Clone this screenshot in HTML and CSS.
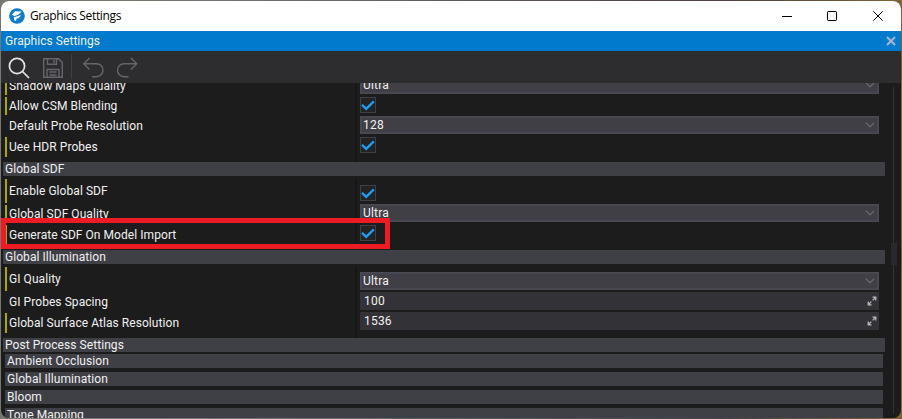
FILE: index.html
```html
<!DOCTYPE html>
<html lang="en">
<head>
<meta charset="utf-8">
<title>Graphics Settings</title>
<link rel="stylesheet" href="styles.css">
</head>
<body>
<svg width="0" height="0" class="defs">
  <symbol id="check" viewBox="0 0 16 16"><path d="M2 7.8 6.2 11.8 13.8 4.4" fill="none" stroke="#1ba1f2" stroke-width="2.3"/></symbol>
  <symbol id="chevron" viewBox="0 0 10 6"><path d="M.8.8 5 4.8 9.2.8" fill="none" stroke="#66666c" stroke-width="1.2"/></symbol>
  <symbol id="drag" viewBox="0 0 10 10"><path d="M2 8 4.3 5.7M5.7 4.3 8 2M5.5 1.2H8.8V4.5M4.5 8.8H1.2V5.5" fill="none" stroke="#bcbcbe" stroke-width="1.2"/></symbol>
</svg>
<div class="window">
  <header class="titlebar">
    <svg class="logo" width="16" height="16" viewBox="0 0 16 16"><circle cx="8" cy="8" r="7.8" fill="#0f7ccb"/><path d="M2.8 6.6 6.2 3.2 12.8 3.4 9.6 6.6 5.4 8.2ZM4.8 9.2 12.4 7 9.4 10.2 7.4 10.8 7 13.2 5 11.8Z" fill="#fff"/></svg>
    <span class="title">Graphics Settings</span>
    <svg class="controls" width="104" height="12" viewBox="0 0 104 12" fill="none" stroke="#000"><path d="M0 6.5H10"/><rect x="45.5" y="1.5" width="9" height="9" rx="1"/><path d="M91.3 1.3 100.7 10.7M100.7 1.3 91.3 10.7"/></svg>
  </header>
  <div class="tab"><span>Graphics Settings</span><svg width="10" height="10" viewBox="0 0 10 10"><path d="M1 1 9 9M9 1 1 9" stroke="#a3b5c8" stroke-width="2.2"/></svg></div>
  <nav class="toolbar">
    <svg width="140" height="32" viewBox="0 0 140 32" fill="none" stroke="#65656c" stroke-width="1.4">
      <g stroke="#e4e4e4" stroke-width="1.7"><circle cx="16" cy="15" r="7.6"/><path d="M21.5 20.5 28 27"/></g>
      <path d="M42.7 7.7H57.5L61.3 11.5V26.3H42.7ZM46.5 7.7V13.3H55.5V7.7M53 9V12M46 26V18.5H58V26M48.5 21H55.5M48.5 24H55.5"/>
      <path d="M70.5 3V28" stroke="#3f3f46" stroke-width="1"/>
      <path d="M88.5 7 82.8 12.7 88.5 18.4M83 12.7H95.5A6.5 6.5 0 0 1 95.5 25.7H91"/>
      <path d="M130 7 135.7 12.7 130 18.4M135.5 12.7H123A6.5 6.5 0 0 0 123 25.7H127.5"/>
    </svg>
  </nav>
  <main class="content">
    <div class="panel">
      <section class="group g1">
        <div class="labels">
          <div class="label mark r1"><span>Shadow Maps Quality</span></div>
          <div class="label mark r2"><span>Allow CSM Blending</span></div>
          <div class="label r3"><span>Default Probe Resolution</span></div>
          <div class="label mark r4"><span>Uee HDR Probes</span></div>
        </div>
        <div class="values">
          <div class="combo cut"><span>Ultra</span><svg><use href="#chevron"/></svg></div>
          <div class="checkbox"><svg><use href="#check"/></svg></div>
          <div class="combo"><span>128</span><svg><use href="#chevron"/></svg></div>
          <div class="checkbox"><svg><use href="#check"/></svg></div>
        </div>
      </section>
      <h2 class="bar">Global SDF</h2>
      <section class="group g2">
        <div class="labels">
          <div class="label mark r5"><span>Enable Global SDF</span></div>
          <div class="label mark r6"><span>Global SDF Quality</span></div>
          <div class="label mark r7"><span>Generate SDF On Model Import</span></div>
        </div>
        <div class="values">
          <div class="checkbox"><svg><use href="#check"/></svg></div>
          <div class="combo"><span>Ultra</span><svg><use href="#chevron"/></svg></div>
          <div class="checkbox"><svg><use href="#check"/></svg></div>
        </div>
        <div class="highlight"></div>
      </section>
      <h2 class="bar">Global Illumination</h2>
      <section class="group g3">
        <div class="labels">
          <div class="label mark r8"><span>GI Quality</span></div>
          <div class="label r9"><span>GI Probes Spacing</span></div>
          <div class="label mark r10"><span>Global Surface Atlas Resolution</span></div>
        </div>
        <div class="values">
          <div class="combo"><span>Ultra</span><svg><use href="#chevron"/></svg></div>
          <div class="number"><span>100</span><svg><use href="#drag"/></svg></div>
          <div class="number"><span>1536</span><svg><use href="#drag"/></svg></div>
        </div>
      </section>
      <h2 class="bar">Post Process Settings</h2>
      <div class="nested">
        <h3 class="bar">Ambient Occlusion</h3>
        <h3 class="bar">Global Illumination</h3>
        <h3 class="bar">Bloom</h3>
        <h3 class="bar">Tone Mapping</h3>
      </div>
    </div>
    <div class="scroll"><div class="thumb"></div></div>
  </main>
</div>
</body>
</html>
```
FILE: styles.css
```css
* { box-sizing: border-box; }
body {
  margin: 0;
  height: 419px;
  padding: 1px;
  overflow: hidden;
  background: linear-gradient(90deg, #777970, #73726c 25%, #4b4140 80%, #7c6437);
  font: 12px/14px Roboto, "Liberation Sans", sans-serif;
  letter-spacing: 0.06px;
  color: #f1f1f1;
}
.defs { display: block; height: 0; }
.window {
  display: flex;
  flex-direction: column;
  height: 417px;
  border-radius: 8px;
  overflow: hidden;
  background: #1c1c1c;
}
.titlebar {
  display: flex;
  align-items: center;
  flex: 0 0 30px;
  padding: 0 15px 0 8px;
  background: #fff;
  color: #000;
}
.title { margin-left: 5px; font: 12px/16px "Open Sans", sans-serif; letter-spacing: -0.36px; }
.controls { margin-left: auto; }
.tab {
  display: flex;
  align-items: center;
  justify-content: space-between;
  flex: 0 0 20px;
  padding: 0 5px 0 4px;
  background: #007acc;
}
.toolbar { flex: 0 0 32px; background: #2d2d30; }
.toolbar svg { display: block; }
.content { display: flex; flex: 1; min-height: 0; overflow: hidden; }
.panel { width: 884px; padding-left: 2px; }
.group { display: flex; position: relative; padding-left: 2px; }
.g1 { height: 79px; }
.g2, .g3 { height: 74px; }
.labels { width: 352px; border-right: 2px solid #171717; margin-top: 3px; }
.g1 .labels { margin-top: 0; }
.values { display: flex; flex-direction: column; width: 522px; padding-left: 3px; letter-spacing: 0.2px; }
.label { display: flex; align-items: center; height: 18px; margin-bottom: 2px; padding-left: 4px; }
.mark { padding-left: 2px; border-left: 2px solid #aaa700; }
.r1 { height: 12px; align-items: flex-end; }
.r1 span { margin-bottom: 2px; }
.r4 { height: 20px; }
.r5, .r8 { height: 24px; }
.r7 { height: 19px; }
.r10 { height: 20px; }
.combo, .number {
  display: flex;
  flex: 0 0 18px;
  align-items: center;
  justify-content: space-between;
  width: 519px;
  padding: 0 3px 0 2px;
  border: 1px solid #4a4a54;
  background: #3f3f45;
}
.combo { box-shadow: inset 0 0 0 1px #46464e; }
.combo svg { width: 10px; height: 6px; }
.combo.cut { margin-top: -7px; }
.number { margin-top: 2px; padding: 0 2px 0 4px; border: 0; background: #333337; }
.number svg { width: 10px; height: 10px; }
.checkbox { flex: 0 0 16px; width: 16px; border: 1px solid #3f3f46; background: #232325; }
.checkbox svg { display: block; width: 16px; height: 16px; margin: -1px; }
.combo + .checkbox { margin-top: 3px; }
.checkbox + .combo { margin-top: 3px; }
.g2 .values { padding-top: 9px; }
.g3 .values { padding-top: 8px; }
.highlight { position: absolute; left: -2px; top: 42px; width: 389px; height: 31px; border: 5px solid #ed1c24; }
.bar { width: 882px; height: 14px; margin: 0; padding-left: 2px; background: #3f3f46; font: inherit; }
.nested { padding: 2px 0 0 2px; }
.nested .bar { width: 878px; margin-bottom: 4px; }
.scroll { width: 6px; height: 327px; margin: 4px 0 0 6px; background: linear-gradient(90deg, transparent 2px, #333337 2px 3px, transparent 3px); }
.thumb { height: 22px; margin-top: 0; background: #29292d; transform: translateY(156px); }
```
